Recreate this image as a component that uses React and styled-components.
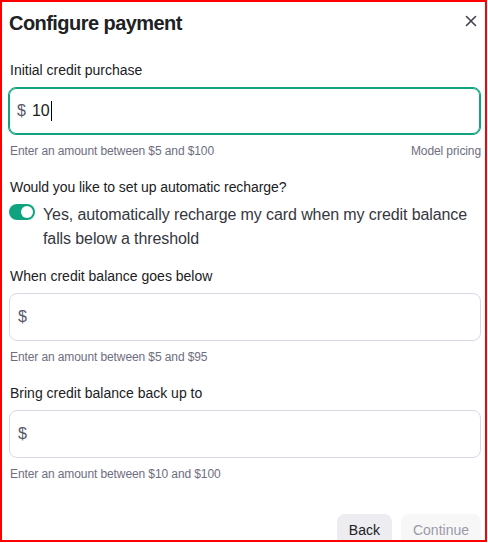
import React from "react";
import styled, { createGlobalStyle } from "styled-components";

const Global = createGlobalStyle`
  html, body { margin: 0; padding: 0; background: #ffffff; }
  body { font-family: "Liberation Sans", Arial, sans-serif; }
  * { box-sizing: border-box; }
`;

const Frame = styled.div`
  width: 487px;
  height: 542px;
  border: 2px solid #ff0000;
  background: #ffffff;
  overflow: hidden;
  padding: 7px 4px 0 7px;
  display: flex;
  flex-direction: column;
  color: #202123;
`;

const Header = styled.div`
  display: flex;
  justify-content: space-between;
  align-items: flex-start;
  height: 28px;
`;

const Title = styled.h2`
  margin: 0;
  font-size: 20px;
  line-height: 28px;
  font-weight: 700;
  letter-spacing: -0.55px;
  color: #202123;
`;

const CloseButton = styled.button`
  width: 20px;
  height: 20px;
  margin-top: 2px;
  padding: 0;
  border: 0;
  background: transparent;
  display: flex;
  align-items: center;
  justify-content: center;
  color: #40414f;
  cursor: pointer;
`;

const Section = styled.div`
  margin-top: ${(p) => p.$top}px;
  display: flex;
  flex-direction: column;
`;

const Label = styled.div`
  font-size: 14px;
  line-height: 20px;
  color: #202123;
  margin-left: 1px;
`;

const AmountBox = styled.div`
  margin-top: 7px;
  height: 48px;
  border-radius: 8px;
  border: 1px solid ${(p) => (p.$focused ? "#10a37f" : "#d9d9e3")};
  box-shadow: ${(p) => (p.$focused ? "inset 0 0 0 1px #10a37f" : "none")};
  display: flex;
  align-items: center;
  padding-left: 8px;
  font-size: 16px;
  margin-left: ${(p) => (p.$focused ? "-1px" : "0")};
`;

const Currency = styled.span`
  color: #565869;
  margin-right: 6px;
`;

const Value = styled.span`
  color: #202123;
`;

const Caret = styled.span`
  display: inline-block;
  width: 1px;
  height: 20px;
  background: #000000;
  margin-left: 1px;
`;

const HelpRow = styled.div`
  margin-top: 8px;
  display: flex;
  justify-content: space-between;
  font-size: 12px;
  line-height: 16px;
  letter-spacing: -0.1px;
  color: #6e6e80;
  margin-left: 1px;
`;

const HelpLink = styled.span`
  color: #6e6e80;
`;

const Question = styled.div`
  margin-top: 18px;
  font-size: 14px;
  line-height: 20px;
  letter-spacing: -0.08px;
  color: #202123;
  margin-left: 1px;
`;

const ToggleRow = styled.label`
  margin-top: 6px;
  display: flex;
  align-items: flex-start;
  gap: 8px;
  font-size: 16px;
  line-height: 24px;
  letter-spacing: -0.1px;
  color: #353740;
`;

const Toggle = styled.span`
  flex: none;
  position: relative;
  width: 26px;
  height: 16px;
  margin-top: 1px;
  border-radius: 8px;
  background: ${(p) => (p.$on ? "#10a37f" : "#c5c5d2")};
`;

const Knob = styled.span`
  position: absolute;
  top: 2px;
  left: ${(p) => (p.$on ? "12px" : "2px")};
  width: 12px;
  height: 12px;
  border-radius: 50%;
  background: #ffffff;
`;

const Footer = styled.div`
  margin-top: 32px;
  display: flex;
  justify-content: flex-end;
  gap: 9px;
`;

const Button = styled.button`
  height: 32px;
  padding: 0 12px;
  border: 0;
  border-radius: 8px;
  font-family: "Liberation Sans", Arial, sans-serif;
  font-size: 14px;
  background: ${(p) => (p.$disabled ? "#f7f7f8" : "#ececf1")};
  color: ${(p) => (p.$disabled ? "#9a9aab" : "#202123")};
`;

function Field({ label, help, extra, value, focused, top }) {
  return (
    <Section $top={top}>
      <Label>{label}</Label>
      <AmountBox $focused={focused}>
        <Currency>$</Currency>
        {value && <Value>{value}</Value>}
        {focused && <Caret />}
      </AmountBox>
      <HelpRow>
        <span>{help}</span>
        {extra && <HelpLink>{extra}</HelpLink>}
      </HelpRow>
    </Section>
  );
}

export default function App() {
  return (
    <>
      <Global />
      <Frame>
        <Header>
          <Title>Configure payment</Title>
          <CloseButton aria-label="Close">
            <svg width="20" height="20" viewBox="0 0 20 20" fill="none">
              <path d="M5.5 5.5L14.5 14.5M14.5 5.5L5.5 14.5" stroke="currentColor" strokeWidth="1.6" strokeLinecap="round" />
            </svg>
          </CloseButton>
        </Header>
        <Field
          top={23}
          label="Initial credit purchase"
          value="10"
          focused
          help="Enter an amount between $5 and $100"
          extra="Model pricing"
        />
        <Question>Would you like to set up automatic recharge?</Question>
        <ToggleRow>
          <Toggle $on>
            <Knob $on />
          </Toggle>
          <span>
            Yes, automatically recharge my card when my credit balance falls below a threshold
          </span>
        </ToggleRow>
        <Field top={15} label="When credit balance goes below" help="Enter an amount between $5 and $95" />
        <Field top={18} label="Bring credit balance back up to" help="Enter an amount between $10 and $100" />
        <Footer>
          <Button>Back</Button>
          <Button $disabled>Continue</Button>
        </Footer>
      </Frame>
    </>
  );
}
